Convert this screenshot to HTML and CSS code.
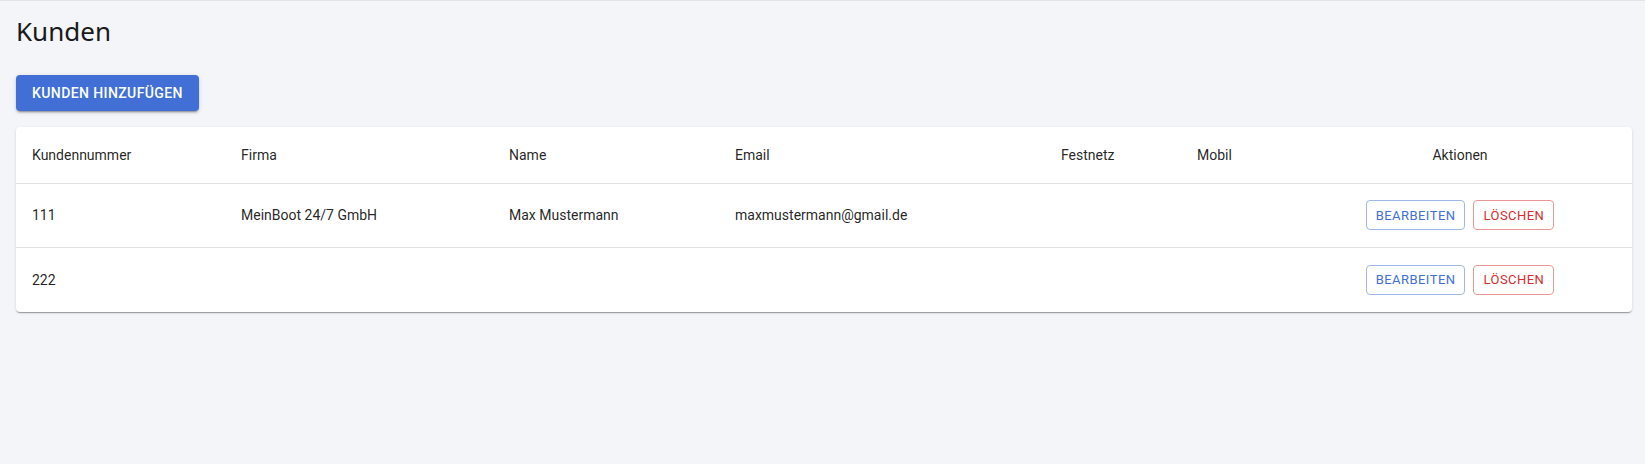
FILE: index.html
```html
<!DOCTYPE html>
<html lang="de">
<head>
<meta charset="utf-8">
<title>Kunden</title>
<link rel="stylesheet" href="styles.css">
</head>
<body>
<div class="page">
  <h1 class="title">Kunden</h1>
  <div class="toolbar">
    <button class="btn-primary">Kunden hinzufügen</button>
  </div>
  <div class="card">
    <table class="table">
      <colgroup>
        <col class="c-nr"><col class="c-firma"><col class="c-name"><col class="c-email"><col class="c-fest"><col class="c-mobil"><col class="c-akt">
      </colgroup>
      <thead>
        <tr>
          <th>Kundennummer</th>
          <th>Firma</th>
          <th>Name</th>
          <th>Email</th>
          <th>Festnetz</th>
          <th>Mobil</th>
          <th class="center">Aktionen</th>
        </tr>
      </thead>
      <tbody>
        <tr>
          <td>111</td>
          <td>MeinBoot 24/7 GmbH</td>
          <td>Max Mustermann</td>
          <td>maxmustermann@gmail.de</td>
          <td></td>
          <td></td>
          <td class="center"><div class="actions"><button class="btn-out blue">Bearbeiten</button><button class="btn-out red">Löschen</button></div></td>
        </tr>
        <tr>
          <td>222</td>
          <td></td>
          <td></td>
          <td></td>
          <td></td>
          <td></td>
          <td class="center"><div class="actions"><button class="btn-out blue">Bearbeiten</button><button class="btn-out red">Löschen</button></div></td>
        </tr>
      </tbody>
    </table>
  </div>
</div>
</body>
</html>
```

FILE: styles.css
```css
* { box-sizing: border-box; }
html, body { margin: 0; padding: 0; }
body {
  background: #f4f5f9;
  font-family: Roboto, "Liberation Sans", sans-serif;
  color: rgba(0,0,0,0.87);
  height: 464px;
}
.page {
  border-top: 1px solid #e2e3e7;
  padding: 12px 13px 0 16px;
  display: flex;
  flex-direction: column;
}
.title {
  margin: 0 0 26px 0;
  font-family: "Noto Sans", "Open Sans", sans-serif;
  font-weight: 400;
  font-size: 26px;
  line-height: 36px;
  color: #1a1a1a;
}
.toolbar { display: flex; margin-bottom: 16px; }
.btn-primary {
  background: #416fd6;
  color: #fff;
  border: none;
  border-radius: 4px;
  height: 36px;
  padding: 0 16px;
  font-family: Roboto, sans-serif;
  font-weight: 500;
  font-size: 14px;
  letter-spacing: 0.4px;
  text-transform: uppercase;
  box-shadow: 0 3px 1px -2px rgba(0,0,0,.2), 0 2px 2px 0 rgba(0,0,0,.14), 0 1px 5px 0 rgba(0,0,0,.12);
  cursor: pointer;
}
.card {
  background: #fff;
  border-radius: 4px;
  box-shadow: 0 2px 1px -1px rgba(0,0,0,.2), 0 1px 1px 0 rgba(0,0,0,.14), 0 1px 3px 0 rgba(0,0,0,.12);
  overflow: hidden;
}
.table {
  width: 100%;
  border-collapse: collapse;
  table-layout: fixed;
  font-size: 14px;
  line-height: 24px;
}
.c-nr { width: 209px; }
.c-firma { width: 268px; }
.c-name { width: 226px; }
.c-email { width: 326px; }
.c-fest { width: 136px; }
.c-mobil { width: 107px; }
.c-akt { width: 344px; }
.table th {
  text-align: left;
  font-weight: 400;
  padding: 0 16px;
  height: 56px;
  border-bottom: 1px solid #e0e0e0;
  color: rgba(0,0,0,0.87);
}
.table td {
  padding: 0 16px;
  height: 64px;
  border-bottom: 1px solid #e0e0e0;
}
.table tbody tr:last-child td { border-bottom: none; height: 65px; }
.table .center { text-align: center; }
.actions {
  display: flex;
  justify-content: center;
  gap: 8px;
}
.btn-out {
  background: #fff;
  height: 30px;
  padding: 0 9px;
  border-radius: 4px;
  font-family: Roboto, sans-serif;
  font-weight: 400;
  font-size: 13px;
  letter-spacing: 0.46px;
  text-transform: uppercase;
  cursor: pointer;
}
.btn-out.blue { color: #416fd6; border: 1px solid #9fb7eb; }
.btn-out.red { color: #d32f2f; border: 1px solid #e99797; }
```
